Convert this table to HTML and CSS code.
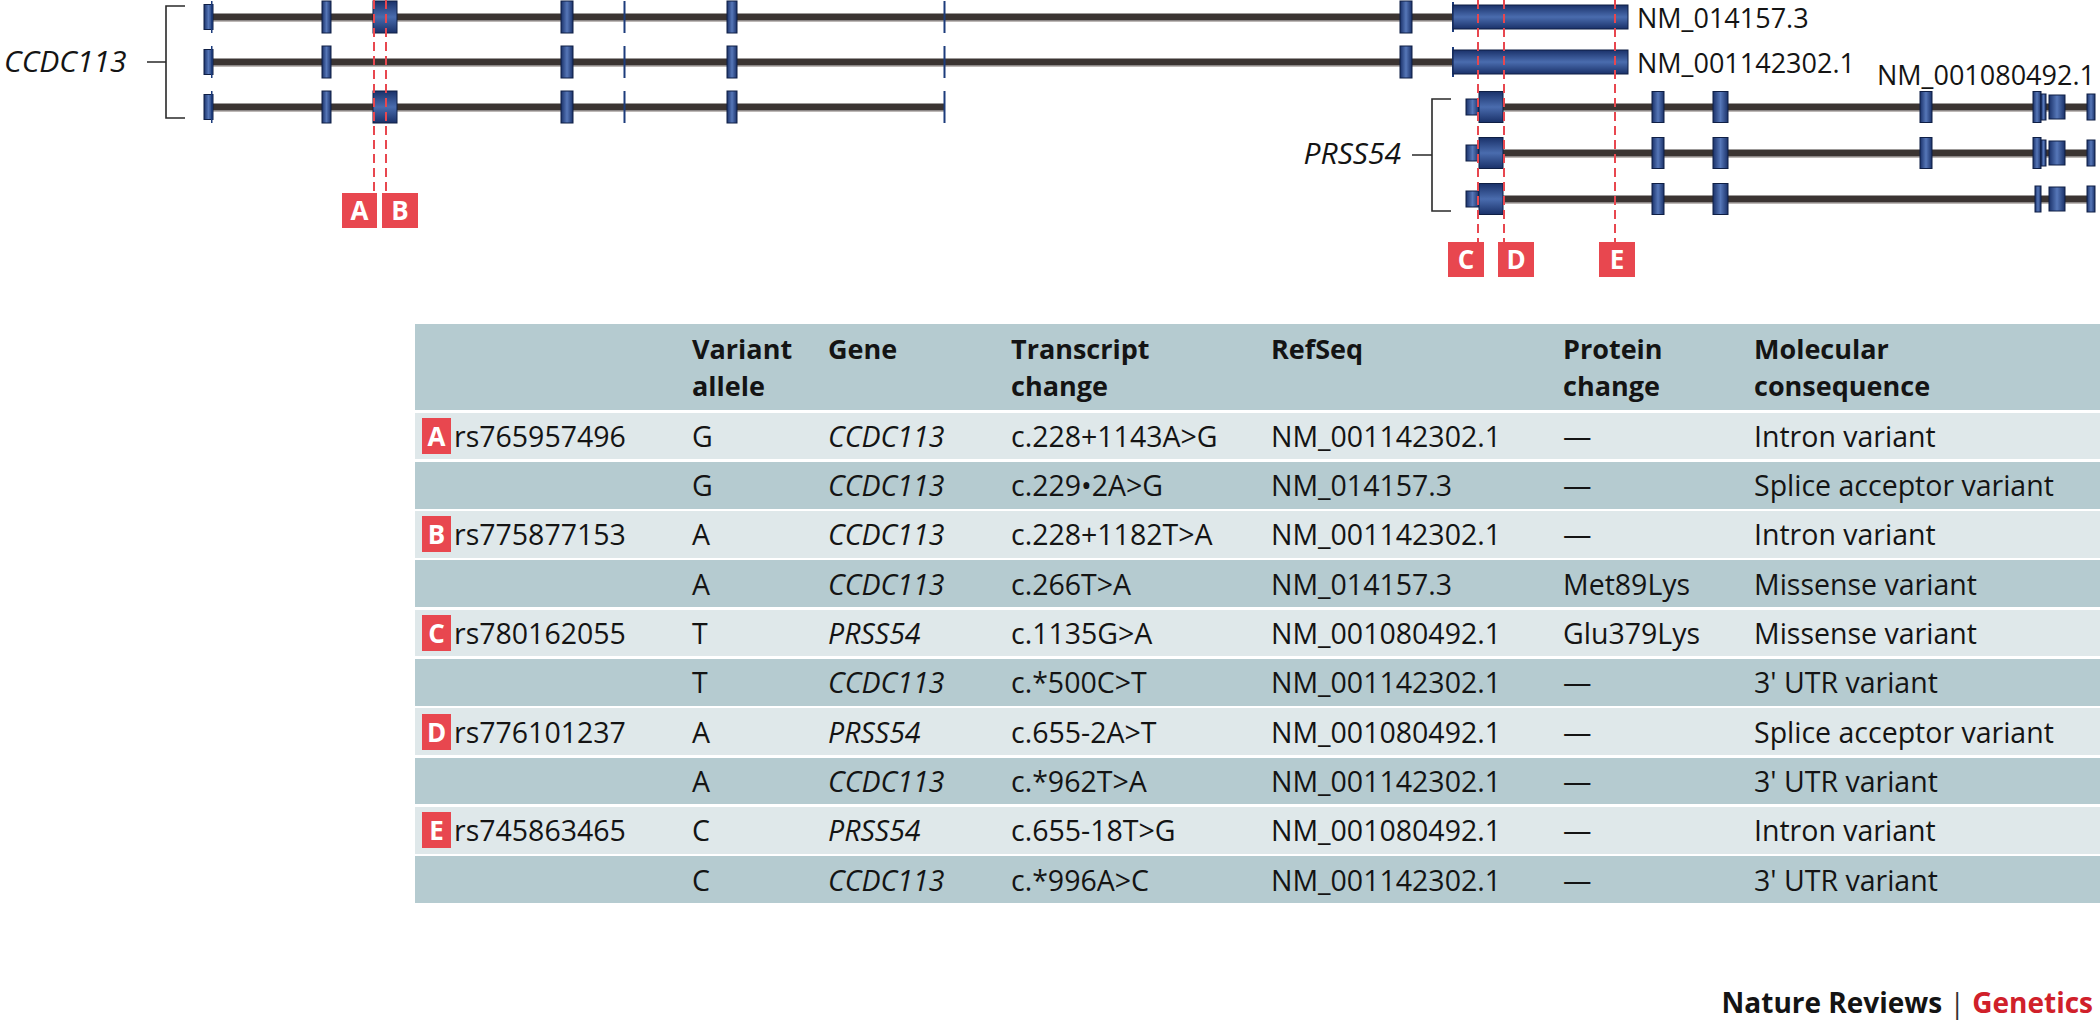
FILE: index.html
```html
<!DOCTYPE html>
<html lang="en">
<head>
<meta charset="utf-8">
<title>CCDC113 / PRSS54 variants</title>
<link rel="stylesheet" href="styles.css">
</head>
<body>
<main class="figure">
  <svg class="diagram" width="2100" height="324" viewBox="0 0 2100 324" xmlns="http://www.w3.org/2000/svg">
    <defs>
      <linearGradient id="exH" x1="0" x2="1" y1="0" y2="0">
        <stop offset="0" stop-color="#1a3169"/>
        <stop offset="0.5" stop-color="#5677b8"/>
        <stop offset="1" stop-color="#1a3169"/>
      </linearGradient>
      <linearGradient id="exV" x1="0" x2="0" y1="0" y2="1">
        <stop offset="0" stop-color="#1a3169"/>
        <stop offset="0.5" stop-color="#4a6cae"/>
        <stop offset="1" stop-color="#1a3169"/>
      </linearGradient>
    </defs>

    <g class="bracket">
      <path d="M185 6 H166 V118 H185 M166 62 H147"/>
    </g>
    <text class="gene-label" x="4" y="72">CCDC113</text>

    <g transform="translate(0,17)">
      <rect class="shadow" x="204" y="3.5" width="1249" height="1.5"/>
      <rect class="intron" x="204" y="-3.5" width="1249" height="7"/>
      <rect class="exh" x="204" y="-12.5" width="9" height="25"/>
      <rect class="tick" x="211" y="-16" width="1.5" height="32"/>
      <rect class="exh" x="322" y="-16" width="9" height="32"/>
      <rect class="exv" x="373" y="-16" width="24" height="32"/>
      <rect class="exh" x="561" y="-16" width="12" height="32"/>
      <rect class="tick" x="623.5" y="-16" width="2" height="32"/>
      <rect class="exh" x="727" y="-16" width="10" height="32"/>
      <rect class="tick" x="943.5" y="-16" width="2" height="32"/>
      <rect class="exh" x="1400" y="-16" width="12" height="32"/>
      <rect class="tick" x="1452" y="-15" width="2" height="30"/>
      <rect class="exv" x="1453" y="-12" width="175" height="24"/>
    </g>
    <g transform="translate(0,62)">
      <rect class="shadow" x="204" y="3.5" width="1249" height="1.5"/>
      <rect class="intron" x="204" y="-3.5" width="1249" height="7"/>
      <rect class="exh" x="204" y="-12.5" width="9" height="25"/>
      <rect class="tick" x="211" y="-16" width="1.5" height="32"/>
      <rect class="exh" x="322" y="-16" width="9" height="32"/>
      <rect class="exh" x="561" y="-16" width="12" height="32"/>
      <rect class="tick" x="623.5" y="-16" width="2" height="32"/>
      <rect class="exh" x="727" y="-16" width="10" height="32"/>
      <rect class="tick" x="943.5" y="-16" width="2" height="32"/>
      <rect class="exh" x="1400" y="-16" width="12" height="32"/>
      <rect class="tick" x="1452" y="-15" width="2" height="30"/>
      <rect class="exv" x="1453" y="-12" width="175" height="24"/>
    </g>
    <g transform="translate(0,107)">
      <rect class="shadow" x="204" y="3.5" width="740" height="1.5"/>
      <rect class="intron" x="204" y="-3.5" width="740" height="7"/>
      <rect class="exh" x="204" y="-12.5" width="9" height="25"/>
      <rect class="tick" x="211" y="-16" width="1.5" height="32"/>
      <rect class="exh" x="322" y="-16" width="9" height="32"/>
      <rect class="exv" x="373" y="-16" width="24" height="32"/>
      <rect class="exh" x="561" y="-16" width="12" height="32"/>
      <rect class="tick" x="623.5" y="-16" width="2" height="32"/>
      <rect class="exh" x="727" y="-16" width="10" height="32"/>
      <rect class="tick" x="943.5" y="-16" width="2" height="32"/>
    </g>

    <text class="nm" x="1637" y="28">NM_014157.3</text>
    <text class="nm" x="1637" y="73">NM_001142302.1</text>
    <text class="nm" x="1877" y="85">NM_001080492.1</text>

    <g class="bracket">
      <path d="M1451 99 H1432 V211 H1451 M1432 155 H1412"/>
    </g>
    <text class="gene-label" x="1401" y="164" text-anchor="end">PRSS54</text>

    <g transform="translate(0,107)">
      <rect class="shadow" x="1479" y="3.5" width="616" height="1.5"/>
      <rect class="intron" x="1479" y="-3.5" width="616" height="7"/>
      <rect class="exh" x="1466" y="-8" width="13" height="16"/>
      <rect class="exv" x="1479" y="-15.5" width="24" height="31"/>
      <rect class="exh" x="1652" y="-15.5" width="12" height="31"/>
      <rect class="exh" x="1713" y="-15.5" width="15" height="31"/>
      <rect class="exh" x="1920" y="-15.5" width="12" height="31"/>
      <rect class="exh" x="2033" y="-15.5" width="8" height="31"/>
      <rect class="exh" x="2041" y="-13" width="5" height="26"/>
      <rect class="exh" x="2049" y="-12" width="16" height="24"/>
      <rect class="exh" x="2087" y="-13" width="8" height="26"/>
    </g>
    <g transform="translate(0,153)">
      <rect class="shadow" x="1479" y="3.5" width="616" height="1.5"/>
      <rect class="intron" x="1479" y="-3.5" width="616" height="7"/>
      <rect class="exh" x="1466" y="-8" width="13" height="16"/>
      <rect class="exv" x="1479" y="-15.5" width="24" height="31"/>
      <rect class="exh" x="1652" y="-15.5" width="12" height="31"/>
      <rect class="exh" x="1713" y="-15.5" width="15" height="31"/>
      <rect class="exh" x="1920" y="-15.5" width="12" height="31"/>
      <rect class="exh" x="2033" y="-15.5" width="8" height="31"/>
      <rect class="exh" x="2041" y="-13" width="5" height="26"/>
      <rect class="exh" x="2049" y="-12" width="16" height="24"/>
      <rect class="exh" x="2087" y="-13" width="8" height="26"/>
    </g>
    <g transform="translate(0,199)">
      <rect class="shadow" x="1479" y="3.5" width="616" height="1.5"/>
      <rect class="intron" x="1479" y="-3.5" width="616" height="7"/>
      <rect class="exh" x="1466" y="-8" width="13" height="16"/>
      <rect class="exv" x="1479" y="-15.5" width="24" height="31"/>
      <rect class="exh" x="1652" y="-15.5" width="12" height="31"/>
      <rect class="exh" x="1713" y="-15.5" width="15" height="31"/>
      <rect class="exh" x="2035" y="-13" width="6" height="26"/>
      <rect class="exh" x="2049" y="-12" width="16" height="24"/>
      <rect class="exh" x="2087" y="-13" width="8" height="26"/>
    </g>

    <g class="marker">
      <line x1="374" y1="0" x2="374" y2="193"/>
      <line x1="386" y1="0" x2="386" y2="193"/>
      <line x1="1478" y1="0" x2="1478" y2="242"/>
      <line x1="1504" y1="0" x2="1504" y2="242"/>
      <line x1="1615" y1="0" x2="1615" y2="242"/>
    </g>
    <g class="tag">
      <rect x="342" y="193" width="35" height="35"/><text x="359.5" y="220">A</text>
      <rect x="382" y="193" width="36" height="35"/><text x="400" y="220">B</text>
      <rect x="1448" y="242" width="36" height="35"/><text x="1466" y="269">C</text>
      <rect x="1498" y="242" width="36" height="35"/><text x="1516" y="269">D</text>
      <rect x="1599" y="242" width="36" height="35"/><text x="1617" y="269">E</text>
    </g>
  </svg>

  <section class="table">
    <div class="row head">
      <div class="cell first"></div>
      <div class="cell">Variant<br>allele</div>
      <div class="cell">Gene</div>
      <div class="cell">Transcript<br>change</div>
      <div class="cell">RefSeq</div>
      <div class="cell">Protein<br>change</div>
      <div class="cell">Molecular<br>consequence</div>
    </div>

    <div class="row light">
      <div class="cell first"><span class="badge">A</span>rs765957496</div>
      <div class="cell">G</div>
      <div class="cell gene">CCDC113</div>
      <div class="cell">c.228+1143A&gt;G</div>
      <div class="cell">NM_001142302.1</div>
      <div class="cell">—</div>
      <div class="cell">Intron variant</div>
    </div>
    <div class="row dark">
      <div class="cell first"></div>
      <div class="cell">G</div>
      <div class="cell gene">CCDC113</div>
      <div class="cell">c.229•2A&gt;G</div>
      <div class="cell">NM_014157.3</div>
      <div class="cell">—</div>
      <div class="cell">Splice acceptor variant</div>
    </div>
    <div class="row light">
      <div class="cell first"><span class="badge">B</span>rs775877153</div>
      <div class="cell">A</div>
      <div class="cell gene">CCDC113</div>
      <div class="cell">c.228+1182T&gt;A</div>
      <div class="cell">NM_001142302.1</div>
      <div class="cell">—</div>
      <div class="cell">Intron variant</div>
    </div>
    <div class="row dark">
      <div class="cell first"></div>
      <div class="cell">A</div>
      <div class="cell gene">CCDC113</div>
      <div class="cell">c.266T&gt;A</div>
      <div class="cell">NM_014157.3</div>
      <div class="cell">Met89Lys</div>
      <div class="cell">Missense variant</div>
    </div>
    <div class="row light">
      <div class="cell first"><span class="badge">C</span>rs780162055</div>
      <div class="cell">T</div>
      <div class="cell gene">PRSS54</div>
      <div class="cell">c.1135G&gt;A</div>
      <div class="cell">NM_001080492.1</div>
      <div class="cell">Glu379Lys</div>
      <div class="cell">Missense variant</div>
    </div>
    <div class="row dark">
      <div class="cell first"></div>
      <div class="cell">T</div>
      <div class="cell gene">CCDC113</div>
      <div class="cell">c.*500C&gt;T</div>
      <div class="cell">NM_001142302.1</div>
      <div class="cell">—</div>
      <div class="cell">3' UTR variant</div>
    </div>
    <div class="row light">
      <div class="cell first"><span class="badge">D</span>rs776101237</div>
      <div class="cell">A</div>
      <div class="cell gene">PRSS54</div>
      <div class="cell">c.655-2A&gt;T</div>
      <div class="cell">NM_001080492.1</div>
      <div class="cell">—</div>
      <div class="cell">Splice acceptor variant</div>
    </div>
    <div class="row dark">
      <div class="cell first"></div>
      <div class="cell">A</div>
      <div class="cell gene">CCDC113</div>
      <div class="cell">c.*962T&gt;A</div>
      <div class="cell">NM_001142302.1</div>
      <div class="cell">—</div>
      <div class="cell">3' UTR variant</div>
    </div>
    <div class="row light">
      <div class="cell first"><span class="badge">E</span>rs745863465</div>
      <div class="cell">C</div>
      <div class="cell gene">PRSS54</div>
      <div class="cell">c.655-18T&gt;G</div>
      <div class="cell">NM_001080492.1</div>
      <div class="cell">—</div>
      <div class="cell">Intron variant</div>
    </div>
    <div class="row dark">
      <div class="cell first"></div>
      <div class="cell">C</div>
      <div class="cell gene">CCDC113</div>
      <div class="cell">c.*996A&gt;C</div>
      <div class="cell">NM_001142302.1</div>
      <div class="cell">—</div>
      <div class="cell">3' UTR variant</div>
    </div>
  </section>

  <footer class="credit">
    <span class="journal">Nature Reviews</span>
    <span class="divider">|</span>
    <span class="subject">Genetics</span>
  </footer>
</main>
</body>
</html>
```

FILE: styles.css
```css
html, body {
  margin: 0;
  padding: 0;
  background: #ffffff;
}

body {
  width: 2100px;
  height: 1020px;
  overflow: hidden;
  font-family: "Open Sans", "Noto Sans", "Liberation Sans", sans-serif;
  color: #141414;
}

.figure {
  display: flex;
  flex-direction: column;
}

.diagram {
  display: block;
}

.bracket path {
  fill: none;
  stroke: #2a2a2a;
  stroke-width: 1.6;
}

.gene-label {
  font-family: "Open Sans", "Noto Sans", sans-serif;
  font-style: italic;
  font-size: 30px;
  fill: #141414;
}

.nm {
  font-family: "Open Sans", "Noto Sans", sans-serif;
  font-size: 27px;
  fill: #141414;
}

.intron {
  fill: #3b3432;
}

.shadow {
  fill: #bdb8b6;
}

.exh {
  fill: url(#exH);
  stroke: #0f1f45;
  stroke-width: 1;
}

.exv {
  fill: url(#exV);
  stroke: #0f1f45;
  stroke-width: 1;
}

.tick {
  fill: #1d3c7c;
}

.marker line {
  stroke: #e8474f;
  stroke-width: 2;
  stroke-dasharray: 9 5;
}

.tag rect {
  fill: #e8474f;
}

.tag text {
  font-family: "Open Sans", "Noto Sans", sans-serif;
  font-weight: 700;
  font-size: 26px;
  fill: #ffffff;
  text-anchor: middle;
}

.table {
  margin-left: 415px;
  display: flex;
  flex-direction: column;
  gap: 2.5px;
}

.row {
  display: grid;
  grid-template-columns: 277px 136px 183px 260px 292px 191px 1fr;
  align-items: center;
  height: 46.8px;
  font-size: 28.5px;
  line-height: 40px;
  white-space: nowrap;
}

.row.light {
  background: #dfe8ea;
}

.row.dark {
  background: #b5cbd0;
}

.row.head {
  height: 86px;
  box-sizing: border-box;
  padding-top: 6px;
  align-items: start;
  font-size: 27px;
  font-weight: 700;
  line-height: 37px;
  background: #b5cbd0;
}

.cell.first {
  display: flex;
  align-items: center;
  gap: 3px;
  padding-left: 7px;
}

.cell.gene {
  font-style: italic;
}

.badge {
  display: flex;
  align-items: center;
  justify-content: center;
  width: 29px;
  height: 36px;
  background: #e8474f;
  color: #ffffff;
  font-weight: 700;
  font-size: 26px;
  line-height: 36px;
}

.credit {
  margin-top: 80px;
  padding-right: 7px;
  text-align: right;
  font-size: 28px;
  line-height: 38px;
  font-weight: 700;
  color: #141414;
}

.divider {
  font-weight: 400;
  color: #333333;
}

.subject {
  color: #d0202a;
}
```
